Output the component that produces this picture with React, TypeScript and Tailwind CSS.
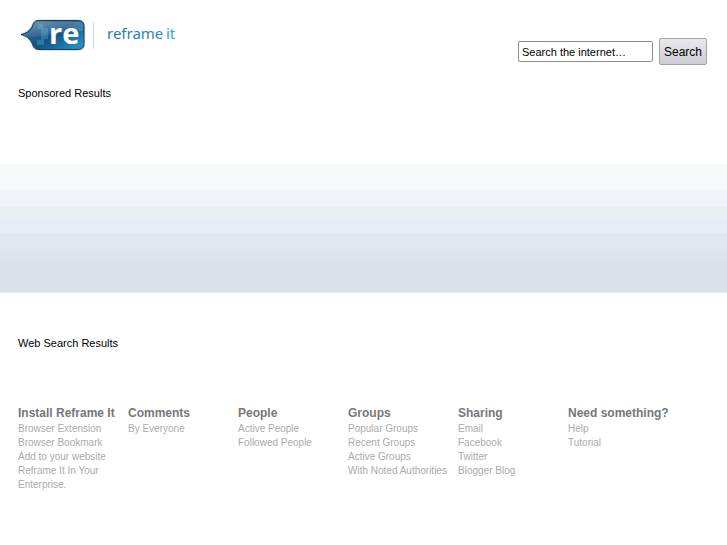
const columns = [
  {
    title: "Install Reframe It",
    links: ["Browser Extension", "Browser Bookmark", "Add to your website", "Reframe It In Your Enterprise."],
  },
  { title: "Comments", links: ["By Everyone"] },
  { title: "People", links: ["Active People", "Followed People"] },
  { title: "Groups", links: ["Popular Groups", "Recent Groups", "Active Groups", "With Noted Authorities"] },
  { title: "Sharing", links: ["Email", "Facebook", "Twitter", "Blogger Blog"] },
  { title: "Need something?", links: ["Help", "Tutorial"] },
];

const bubblePath =
  "M3 16.500C8 15.500 12 13 14.500 8C15.500 4 17.500 2.500 21 2.500H60C64 2.500 66 4.500 66 8.500V25.500C66 29.500 64 31.500 60 31.500H21C17.500 31.500 15.500 30 14.500 26C12 20.500 8 17.500 3 16.500Z";

function Logo() {
  return (
    <svg className="overflow-visible" width="164" height="36" viewBox="0 0 164 36" role="img" aria-label="reframe it">
      <defs>
        <linearGradient id="bubble" x1="0" y1="0" x2="1" y2="0.7">
          <stop offset="0" stopColor="#54809f" />
          <stop offset="0.3" stopColor="#2c628c" />
          <stop offset="0.6" stopColor="#155083" />
          <stop offset="1" stopColor="#2389c0" />
        </linearGradient>
        <linearGradient id="gloss" x1="0" y1="0" x2="0" y2="1">
          <stop offset="0" stopColor="#ffffff" stopOpacity="0.25" />
          <stop offset="1" stopColor="#ffffff" stopOpacity="0.06" />
        </linearGradient>
        <linearGradient id="word" gradientUnits="userSpaceOnUse" x1="88" y1="0" x2="160" y2="0">
          <stop offset="0" stopColor="#2a78a8" />
          <stop offset="0.7" stopColor="#2589b8" />
          <stop offset="1" stopColor="#35b3d6" />
        </linearGradient>
      </defs>
      <path d={bubblePath} fill="#c3cdd7" stroke="#d3dae1" strokeWidth="2.500" />
      <path d={bubblePath} fill="url(#bubble)" stroke="#17405f" strokeWidth="1" />
      <path d="M20 6h5v4h5v11h-4v6h-7v-5h4v-11h-3z" fill="#3e9db5" opacity="0.5" />
      <path
        d="M15 9C16 5 18 3.500 21 3.500H60C63 3.500 65 5 65 8V13C48 13 31 17 15 19H9L5 16.500C11 15 13 13 15 9Z"
        fill="url(#gloss)"
      />
      <text x="31" y="26" fontSize="29" fontWeight="700" fill="#fff" fontFamily="'Open Sans', sans-serif">
        re
      </text>
      <rect x="75" y="4" width="1" height="27" fill="#ccdbe8" />
      <g fontSize="15" fill="url(#word)" fontFamily="'Noto Sans', sans-serif">
        <text x="89" y="21">reframe</text>
        <text x="148" y="21">it</text>
      </g>
    </svg>
  );
}

export default function App() {
  return (
    <div className="min-h-screen bg-white font-['Liberation_Sans',Arial,sans-serif] text-[11px] leading-4 text-black">
      <header className="flex items-start justify-between pt-[18px] pr-5 pl-[18px]">
        <a href="#home">
          <Logo />
        </a>
        <form className="mt-5 flex items-center gap-[6px]" onSubmit={(e) => e.preventDefault()}>
          <input
            type="text"
            aria-label="Search the internet"
            defaultValue="Search the internet…"
            className="h-[21px] w-[135px] rounded-[2px] border border-[#8c8c8c] bg-white px-[3px] text-[11px]"
          />
          <button
            type="submit"
            className="h-[27px] w-12 rounded-[2px] border border-[#a3a3a6] bg-linear-to-b from-[#e9e9ed] to-[#cdcdd3] text-[12px]"
          >
            Search
          </button>
        </form>
      </header>
      <main>
        <h2 className="mt-5 px-[18px]">Sponsored Results</h2>
        <div className="mt-[63px]" aria-hidden="true">
          <div className="h-[26px] bg-[#f6f8fc]" />
          <div className="h-[10px] bg-[#f2f4f8]" />
          <div className="h-[7px] bg-[#eff2f6]" />
          <div className="h-[10px] bg-[#ebeff4]" />
          <div className="h-[17px] bg-[#e6ebf4]" />
          <div className="h-[15px] bg-[#e1e6ef]" />
          <div className="h-[11px] bg-[#dde4ee]" />
          <div className="h-8 bg-[#dae1eb]" />
          <div className="h-px bg-[#e8edf3]" />
        </div>
        <h2 className="mt-[42px] px-[18px]">Web Search Results</h2>
      </main>
      <footer className="mt-[54px] px-[18px] pb-[50px]">
        <div className="grid max-w-[660px] grid-cols-6">
          {columns.map((column) => (
            <section key={column.title}>
              <h3 className="text-[12px] leading-[17px] font-bold whitespace-nowrap text-[#777]">{column.title}</h3>
              <ul className="pr-2 text-[10px] leading-[14px] text-[#aaa]">
                {column.links.map((link) => (
                  <li key={link}>
                    <a href="#link">{link}</a>
                  </li>
                ))}
              </ul>
            </section>
          ))}
        </div>
      </footer>
    </div>
  );
}
